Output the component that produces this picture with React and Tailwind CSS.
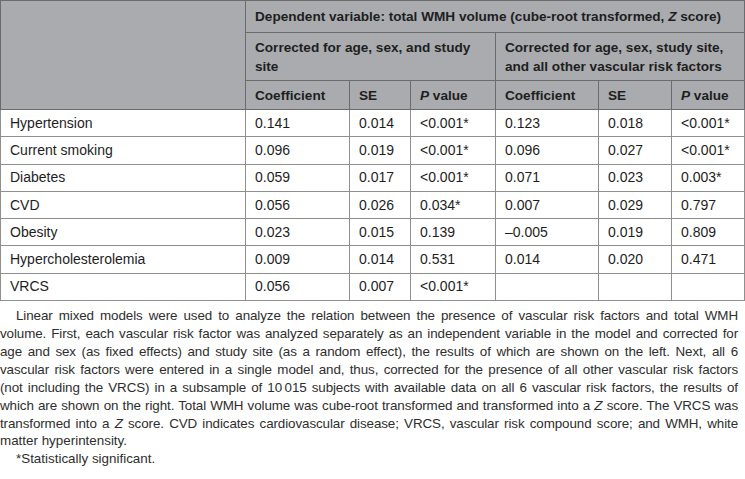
const rows = [
  ["Hypertension", "0.141", "0.014", "<0.001*", "0.123", "0.018", "<0.001*"],
  ["Current smoking", "0.096", "0.019", "<0.001*", "0.096", "0.027", "<0.001*"],
  ["Diabetes", "0.059", "0.017", "<0.001*", "0.071", "0.023", "0.003*"],
  ["CVD", "0.056", "0.026", "0.034*", "0.007", "0.029", "0.797"],
  ["Obesity", "0.023", "0.015", "0.139", "\u20130.005", "0.019", "0.809"],
  ["Hypercholesterolemia", "0.009", "0.014", "0.531", "0.014", "0.020", "0.471"],
  ["VRCS", "0.056", "0.007", "<0.001*", "", "", ""],
];

const notes = [
  "Linear mixed models were used to analyze the relation between the presence of vascular risk factors and total WMH",
  "volume. First, each vascular risk factor was analyzed separately as an independent variable in the model and corrected for",
  "age and sex (as fixed effects) and study site (as a random effect), the results of which are shown on the left. Next, all 6",
  "vascular risk factors were entered in a single model and, thus, corrected for the presence of all other vascular risk factors",
  "(not including the VRCS) in a subsample of 10\u2009015 subjects with available data on all 6 vascular risk factors, the results of",
];

function PValue() {
  return (
    <>
      <i>P</i> value
    </>
  );
}

export default function App() {
  const head = "border border-[#6b6b6b] bg-[#a9abae] px-[9px] text-left align-middle font-bold";
  const cell = "border border-[#8f8f8f] px-[9px] text-left align-middle";
  const just = "text-justify [text-align-last:justify] tracking-[-0.1px]";

  return (
    <div
      className="w-[745px] h-[479px] bg-white text-[#1e1e1e] overflow-hidden"
      style={{ fontFamily: '"Liberation Sans", Arial, sans-serif' }}
    >
      <table className="w-[744px] table-fixed border-collapse text-[14px] leading-[19px]">
        <colgroup>
          <col className="w-[245px]" />
          <col className="w-[104px]" />
          <col className="w-[61px]" />
          <col className="w-[85px]" />
          <col className="w-[103px]" />
          <col className="w-[73px]" />
          <col className="w-[73px]" />
        </colgroup>
        <thead className="text-[13.6px]">
          <tr className="h-[32px]">
            <th rowSpan={3} className={head}></th>
            <th colSpan={6} className={head}>
              Dependent variable: total WMH volume (cube-root transformed, <i>Z</i> score)
            </th>
          </tr>
          <tr className="h-[48px]">
            <th colSpan={3} className={head}>
              Corrected for age, sex, and study site
            </th>
            <th colSpan={3} className={head}>
              Corrected for age, sex, study site, and all other vascular risk factors
            </th>
          </tr>
          <tr className="h-[29px]">
            <th className={head}>Coefficient</th>
            <th className={head}>SE</th>
            <th className={head}><PValue /></th>
            <th className={head}>Coefficient</th>
            <th className={head}>SE</th>
            <th className={head}><PValue /></th>
          </tr>
        </thead>
        <tbody>
          {rows.map((r) => (
            <tr key={r[0]} className="h-[27.3px]">
              {r.map((v, i) => (
                <td key={i} className={cell}>
                  {v}
                </td>
              ))}
            </tr>
          ))}
        </tbody>
      </table>

      {/* table footnote, one justified line per div so breaks match */}
      <div className="mt-[6px] w-[738px] text-[13.4px] leading-[17.9px] text-[#2e2e2e]">
        {notes.map((line, i) => (
          <div key={i} className={`${just} ${i === 0 ? "indent-[16px]" : ""}`}>
            {line}
          </div>
        ))}
        <div className={just}>
          which are shown on the right. Total WMH volume was cube-root transformed and transformed into a <i>Z</i>&nbsp;score. The VRCS was
        </div>
        <div className={just}>
          transformed into a <i>Z</i> score. CVD indicates cardiovascular disease; VRCS, vascular risk compound score; and WMH, white
        </div>
        <div>matter hyperintensity.</div>
        <div className="indent-[16px]">*Statistically significant.</div>
      </div>
    </div>
  );
}
